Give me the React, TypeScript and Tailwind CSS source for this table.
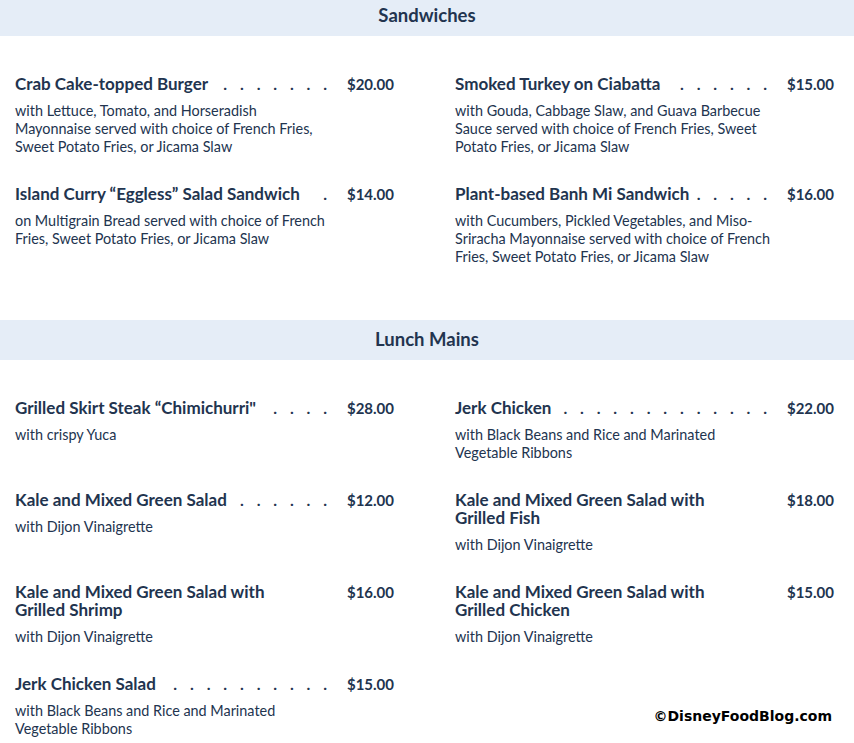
import React from "react";

type Item = { title: string[]; price: string; desc: string[]; dots?: number };

const sandwiches: [Item, Item][] = [
  [
    {
      title: ["Crab Cake-topped Burger"],
      price: "$20.00",
      dots: 7,
      desc: [
        "with Lettuce, Tomato, and Horseradish",
        "Mayonnaise served with choice of French Fries,",
        "Sweet Potato Fries, or Jicama Slaw",
      ],
    },
    {
      title: ["Smoked Turkey on Ciabatta"],
      price: "$15.00",
      dots: 6,
      desc: [
        "with Gouda, Cabbage Slaw, and Guava Barbecue",
        "Sauce served with choice of French Fries, Sweet",
        "Potato Fries, or Jicama Slaw",
      ],
    },
  ],
  [
    {
      title: ["Island Curry \u201CEggless\u201D Salad Sandwich"],
      price: "$14.00",
      dots: 1,
      desc: [
        "on Multigrain Bread served with choice of French",
        "Fries, Sweet Potato Fries, or Jicama Slaw",
      ],
    },
    {
      title: ["Plant-based Banh Mi Sandwich"],
      price: "$16.00",
      dots: 5,
      desc: [
        "with Cucumbers, Pickled Vegetables, and Miso-",
        "Sriracha Mayonnaise served with choice of French",
        "Fries, Sweet Potato Fries, or Jicama Slaw",
      ],
    },
  ],
];

const mains: [Item, Item | null][] = [
  [
    {
      title: ["Grilled Skirt Steak \u201CChimichurri\""],
      price: "$28.00",
      dots: 4,
      desc: ["with crispy Yuca"],
    },
    {
      title: ["Jerk Chicken"],
      price: "$22.00",
      dots: 13,
      desc: ["with Black Beans and Rice and Marinated", "Vegetable Ribbons"],
    },
  ],
  [
    {
      title: ["Kale and Mixed Green Salad"],
      price: "$12.00",
      dots: 6,
      desc: ["with Dijon Vinaigrette"],
    },
    {
      title: ["Kale and Mixed Green Salad with", "Grilled Fish"],
      price: "$18.00",
      desc: ["with Dijon Vinaigrette"],
    },
  ],
  [
    {
      title: ["Kale and Mixed Green Salad with", "Grilled Shrimp"],
      price: "$16.00",
      desc: ["with Dijon Vinaigrette"],
    },
    {
      title: ["Kale and Mixed Green Salad with", "Grilled Chicken"],
      price: "$15.00",
      desc: ["with Dijon Vinaigrette"],
    },
  ],
  [
    {
      title: ["Jerk Chicken Salad"],
      price: "$15.00",
      dots: 10,
      desc: ["with Black Beans and Rice and Marinated", "Vegetable Ribbons"],
    },
    null,
  ],
];

function MenuItem({ item }: { item: Item }) {
  const dots = Array.from({ length: item.dots ?? 0 });
  return (
    <div className="flex flex-col">
      <div className="flex items-start">
        <div className="flex w-[318.5px] items-start">
          <div className="shrink-0 whitespace-nowrap text-[17px] font-bold leading-[18px]">
            {item.title.map((t, i) => (
              <div key={i}>{t}</div>
            ))}
          </div>
          {dots.length > 0 && (
            <div className="flex h-[18px] min-w-0 flex-1 justify-end">
              {dots.map((_, i) => (
                <span
                  key={i}
                  className="w-[16.67px] shrink-0 text-center text-[16px] font-bold leading-[18px]"
                >
                  .
                </span>
              ))}
            </div>
          )}
        </div>
        <div className="w-[60.5px] text-right text-[15px] font-bold leading-[18px]">
          {item.price}
        </div>
      </div>
      <div className="mt-[9px] whitespace-nowrap text-[14.4px] leading-[18px]">
        {item.desc.map((d, i) => (
          <div key={i}>{d}</div>
        ))}
      </div>
    </div>
  );
}

function Header({ label, first }: { label: string; first?: boolean }) {
  return (
    <div
      className={`flex items-center justify-center bg-[#e5edf7] text-[18.5px] font-bold ${
        first ? "h-[36px] pb-[4px]" : "h-[40px]"
      }`}
    >
      {label}
    </div>
  );
}

export default function App() {
  return (
    <div
      className="h-[743px] w-[854px] overflow-hidden bg-white text-[#22344f]"
      style={{ fontFamily: "Lato, 'Noto Sans', sans-serif" }}
    >
      <Header label="Sandwiches" first />
      <div className="grid grid-cols-[379px_379px] gap-x-[61px] gap-y-[29px] pb-[54px] pl-[15px] pt-[39px]">
        {sandwiches.map(([a, b], i) => (
          <React.Fragment key={i}>
            <MenuItem item={a} />
            <MenuItem item={b} />
          </React.Fragment>
        ))}
      </div>
      <Header label="Lunch Mains" />
      <div className="grid grid-cols-[379px_379px] gap-x-[61px] gap-y-[29px] pl-[15px] pt-[39px]">
        {mains.map(([a, b], i) => (
          <React.Fragment key={i}>
            <MenuItem item={a} />
            {b ? (
              <MenuItem item={b} />
            ) : (
              <div className="flex justify-end pr-[2px] pt-[32px]">
                <span
                  className="text-[14px] font-bold leading-[18px] text-black"
                  style={{ fontFamily: "'DejaVu Sans', sans-serif" }}
                >
                  ©DisneyFoodBlog.com
                </span>
              </div>
            )}
          </React.Fragment>
        ))}
      </div>
    </div>
  );
}
